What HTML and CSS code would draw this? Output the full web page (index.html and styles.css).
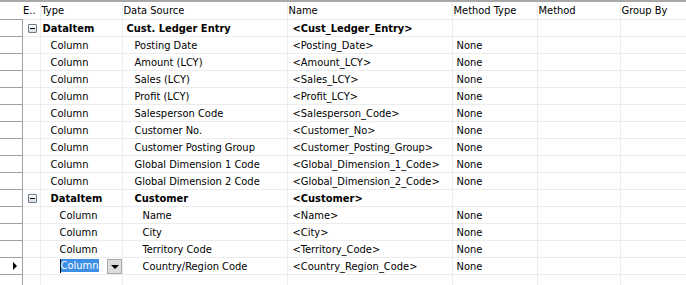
FILE: index.html
```html
<!DOCTYPE html>
<html lang="en">

<head>
    <meta charset="UTF-8">
    <title>Report Designer - DataItems</title>
    <link rel="stylesheet" href="styles.css">
</head>

<body>

    <table class="grid">
        <colgroup>
            <col class="c-sel">
            <col class="c-exp">
            <col class="c-type">
            <col class="c-src">
            <col class="c-name">
            <col class="c-mtype">
            <col class="c-method">
            <col class="c-group">
        </colgroup>
        <thead>
            <tr>
                <th class="sel-head"></th>
                <th class="exp-head">E..</th>
                <th>Type</th>
                <th>Data Source</th>
                <th>Name</th>
                <th>Method Type</th>
                <th>Method</th>
                <th>Group By</th>
            </tr>
        </thead>
        <tbody>
            <tr class="item">
                <td class="sel"></td>
                <td class="exp"><span class="minus"></span></td>
                <td class="type lvl0">DataItem</td>
                <td class="src lvl0">Cust. Ledger Entry</td>
                <td class="name">&lt;Cust_Ledger_Entry&gt;</td>
                <td class="mtype"></td>
                <td></td>
                <td></td>
            </tr>
            <tr>
                <td class="sel"></td>
                <td class="exp"></td>
                <td class="type lvl1">Column</td>
                <td class="src lvl1">Posting Date</td>
                <td class="name">&lt;Posting_Date&gt;</td>
                <td class="mtype">None</td>
                <td></td>
                <td></td>
            </tr>
            <tr>
                <td class="sel"></td>
                <td class="exp"></td>
                <td class="type lvl1">Column</td>
                <td class="src lvl1">Amount (LCY)</td>
                <td class="name">&lt;Amount_LCY&gt;</td>
                <td class="mtype">None</td>
                <td></td>
                <td></td>
            </tr>
            <tr>
                <td class="sel"></td>
                <td class="exp"></td>
                <td class="type lvl1">Column</td>
                <td class="src lvl1">Sales (LCY)</td>
                <td class="name">&lt;Sales_LCY&gt;</td>
                <td class="mtype">None</td>
                <td></td>
                <td></td>
            </tr>
            <tr>
                <td class="sel"></td>
                <td class="exp"></td>
                <td class="type lvl1">Column</td>
                <td class="src lvl1">Profit (LCY)</td>
                <td class="name">&lt;Profit_LCY&gt;</td>
                <td class="mtype">None</td>
                <td></td>
                <td></td>
            </tr>
            <tr>
                <td class="sel"></td>
                <td class="exp"></td>
                <td class="type lvl1">Column</td>
                <td class="src lvl1">Salesperson Code</td>
                <td class="name">&lt;Salesperson_Code&gt;</td>
                <td class="mtype">None</td>
                <td></td>
                <td></td>
            </tr>
            <tr>
                <td class="sel"></td>
                <td class="exp"></td>
                <td class="type lvl1">Column</td>
                <td class="src lvl1">Customer No.</td>
                <td class="name">&lt;Customer_No&gt;</td>
                <td class="mtype">None</td>
                <td></td>
                <td></td>
            </tr>
            <tr>
                <td class="sel"></td>
                <td class="exp"></td>
                <td class="type lvl1">Column</td>
                <td class="src lvl1">Customer Posting Group</td>
                <td class="name">&lt;Customer_Posting_Group&gt;</td>
                <td class="mtype">None</td>
                <td></td>
                <td></td>
            </tr>
            <tr>
                <td class="sel"></td>
                <td class="exp"></td>
                <td class="type lvl1">Column</td>
                <td class="src lvl1">Global Dimension 1 Code</td>
                <td class="name">&lt;Global_Dimension_1_Code&gt;</td>
                <td class="mtype">None</td>
                <td></td>
                <td></td>
            </tr>
            <tr>
                <td class="sel"></td>
                <td class="exp"></td>
                <td class="type lvl1">Column</td>
                <td class="src lvl1">Global Dimension 2 Code</td>
                <td class="name">&lt;Global_Dimension_2_Code&gt;</td>
                <td class="mtype">None</td>
                <td></td>
                <td></td>
            </tr>
            <tr class="item">
                <td class="sel"></td>
                <td class="exp"><span class="minus"></span></td>
                <td class="type lvl1">DataItem</td>
                <td class="src lvl1">Customer</td>
                <td class="name">&lt;Customer&gt;</td>
                <td class="mtype"></td>
                <td></td>
                <td></td>
            </tr>
            <tr>
                <td class="sel"></td>
                <td class="exp"></td>
                <td class="type lvl2">Column</td>
                <td class="src lvl2">Name</td>
                <td class="name">&lt;Name&gt;</td>
                <td class="mtype">None</td>
                <td></td>
                <td></td>
            </tr>
            <tr>
                <td class="sel"></td>
                <td class="exp"></td>
                <td class="type lvl2">Column</td>
                <td class="src lvl2">City</td>
                <td class="name">&lt;City&gt;</td>
                <td class="mtype">None</td>
                <td></td>
                <td></td>
            </tr>
            <tr>
                <td class="sel"></td>
                <td class="exp"></td>
                <td class="type lvl2">Column</td>
                <td class="src lvl2">Territory Code</td>
                <td class="name">&lt;Territory_Code&gt;</td>
                <td class="mtype">None</td>
                <td></td>
                <td></td>
            </tr>
            <tr class="current">
                <td class="sel"><span class="arrow"></span></td>
                <td class="exp"></td>
                <td class="type lvl2 editing">
                    <span class="caret"></span><span class="picked">Column</span>
                    <span class="drop"></span>
                </td>
                <td class="src lvl2">Country/Region Code</td>
                <td class="name">&lt;Country_Region_Code&gt;</td>
                <td class="mtype">None</td>
                <td></td>
                <td></td>
            </tr>
            <tr class="blank">
                <td class="sel"></td>
                <td class="exp"></td>
                <td></td>
                <td></td>
                <td></td>
                <td></td>
                <td></td>
                <td></td>
            </tr>
        </tbody>
    </table>

</body>

</html>
```

FILE: styles.css
```css
body {
    margin: 0;
    background-color: #fff;
    font-family: Tahoma, "DejaVu Sans Condensed", "DejaVu Sans", sans-serif;
    font-size: 11px;
    color: #000;
    overflow: hidden;
}

.grid {
    table-layout: fixed;
    border-collapse: collapse;
    width: 700px;
    border-top: 2px solid #a8a8a8;
}

.c-sel { width: 22px; }
.c-exp { width: 18px; }
.c-type { width: 82px; }
.c-src { width: 165px; }
.c-name { width: 165px; }
.c-mtype { width: 85px; }
.c-method { width: 83px; }
.c-group { width: 80px; }

th {
    height: 17px;
    padding: 0 0 0 1px;
    font-weight: normal;
    text-align: left;
    white-space: nowrap;
    border-left: 1px solid #ececec;
    border-bottom: 1px solid #ececec;
}

th.sel-head {
    border-left: none;
    border-bottom: 1px solid #a0a0a0;
}

th.exp-head {
    padding-left: 1px;
    border-left: none;
}

td {
    height: 16px;
    padding: 0;
    white-space: nowrap;
    overflow: visible;
    border-left: 1px solid #ececec;
    border-bottom: 1px solid #ececec;
}

td.sel {
    border: 1px solid #a0a0a0;
    border-left: none;
    position: relative;
}

td.exp {
    border-left: none;
    padding-left: 5px;
}

.item td {
    font-weight: bold;
}

.type.lvl0 { padding-left: 2px; }
.type.lvl1 { padding-left: 10px; }
.type.lvl2 { padding-left: 19px; }

.src.lvl0 { padding-left: 4px; }
.src.lvl1 { padding-left: 12px; }
.src.lvl2 { padding-left: 20px; }

.name { padding-left: 5px; }
.mtype { padding-left: 4px; }

.minus {
    display: block;
    width: 7px;
    height: 7px;
    border: 1px solid #6d7a88;
    border-radius: 1px;
    background: linear-gradient(#fff, #d8dde4);
    position: relative;
}

.minus::after {
    content: "";
    position: absolute;
    left: 1px;
    top: 3px;
    width: 5px;
    height: 1px;
    background-color: #000;
}

.arrow {
    position: absolute;
    left: 13px;
    top: 4px;
    width: 0;
    height: 0;
    border-top: 4px solid transparent;
    border-bottom: 4px solid transparent;
    border-left: 4px solid #000;
}

.editing {
    position: relative;
}

.caret {
    display: inline-block;
    width: 1px;
    height: 14px;
    background-color: #000;
    vertical-align: middle;
}

.picked {
    background-color: #3d8ee6;
    color: #fff;
    padding-right: 1px;
}

.drop {
    position: absolute;
    left: 66px;
    top: 1px;
    width: 13px;
    height: 13px;
    border: 1px solid #a9a9a9;
    background-color: #dcdcdc;
}

.drop::after {
    content: "";
    position: absolute;
    left: 3px;
    top: 5px;
    border-left: 4px solid transparent;
    border-right: 4px solid transparent;
    border-top: 4px solid #000;
}

.blank td {
    height: 16px;
}
```
